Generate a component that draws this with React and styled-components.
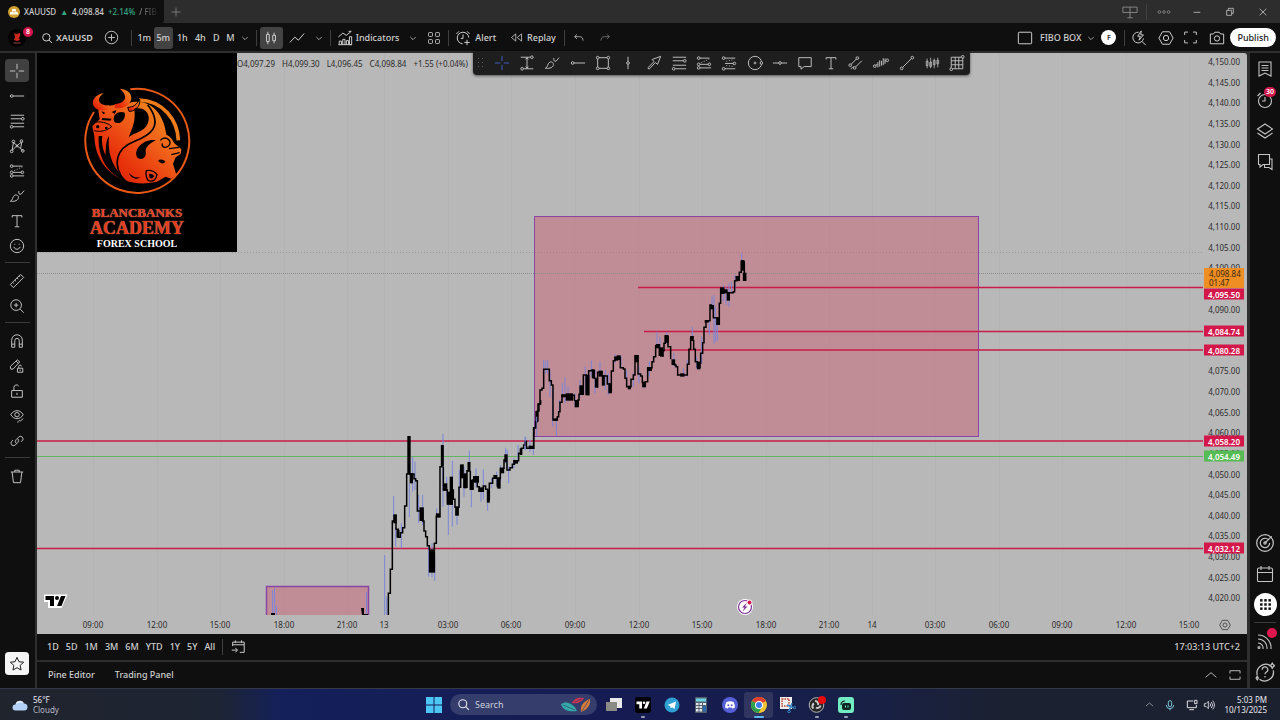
import React from "react"
import styled, { createGlobalStyle } from "styled-components"

/* Data */

const prices = Array.from({ length: 27 }, (_, i) => 4150 - i * 5)

// these would sit fully under a price tag
const coveredPrices = [4095, 4085, 4080]

const ticks = [
  ["09:00", 64],
  ["12:00", 63],
  ["15:00", 64],
  ["18:00", 63],
  ["21:00", 37],
  ["13", 64],
  ["03:00", 63],
  ["06:00", 64],
  ["09:00", 64],
  ["12:00", 63],
  ["15:00", 64],
  ["18:00", 63],
  ["21:00", 43],
  ["14", 63],
  ["03:00", 64],
  ["06:00", 63],
  ["09:00", 64],
  ["12:00", 63],
  ["15:00", 14],
]

const tags = [
  { value: "4,095.50", y: 241, color: "#d3174b" },
  { value: "4,084.74", y: 278, color: "#d3174b" },
  { value: "4,080.28", y: 297, color: "#d3174b" },
  { value: "4,058.20", y: 388, color: "#d3174b" },
  { value: "4,054.49", y: 403, color: "#56bb54" },
  { value: "4,032.12", y: 495, color: "#d3174b" },
]

// [x, top, bottom] of every wick, three units to a pixel
const wicksA = [
  [44, 465, 645], [50, 590, 645], [71, 288, 350], [77, 380, 440], [94, 370, 445],
  [118, 250, 352], [128, 170, 275], [135, 185, 270], [146, 285, 370], [158, 285, 375],
  [176, 440, 530], [186, 430, 532], [194, 470, 543], [200, 325, 430], [219, 102, 320],
  [230, 230, 290], [235, 300, 405], [247, 183, 380], [261, 330, 375], [268, 210, 320],
  [282, 200, 290], [298, 152, 200], [304, 250, 322], [318, 205, 262], [333, 270, 305],
  [340, 208, 298], [353, 300, 332], [365, 235, 265], [380, 215, 255], [392, 195, 240],
  [407, 143, 190], [412, 150, 200], [416, 200, 250], [432, 175, 205], [444, 135, 180],
  [467, 112, 150], [480, 120, 155], [490, 140, 165],
]
const wicksB = [
  [15, 590, 630], [50, 530, 588], [71, 360, 440], [77, 362, 400], [83, 360, 400],
  [90, 390, 470], [98, 440, 560], [109, 540, 588], [118, 480, 510], [127, 430, 480],
  [135, 412, 490], [144, 440, 485], [165, 460, 500], [180, 420, 470], [196, 380, 460],
  [214, 362, 410], [225, 390, 460], [240, 365, 400], [256, 390, 450], [265, 400, 465],
  [285, 342, 370], [303, 345, 380], [320, 390, 440], [340, 400, 440], [357, 380, 430],
  [372, 430, 445], [388, 365, 410], [411, 275, 320], [420, 290, 345], [440, 276, 310],
  [462, 340, 380], [490, 385, 410], [502, 360, 410], [517, 260, 300], [530, 350, 385],
  [545, 290, 370], [568, 240, 285], [576, 170, 210], [582, 165, 310], [587, 200, 305],
  [592, 240, 303], [610, 135, 185], [618, 140, 195], [627, 130, 200], [635, 125, 160],
  [645, 105, 150], [665, 40, 90],
]

// [centre x, top, bottom, width] of the wide bodies
const bodiesA = [
  [75, 345, 370, 10], [84, 390, 413, 9], [117, 108, 222, 10], [124, 220, 250, 10],
  [155, 322, 363, 13], [186, 448, 518, 19], [204, 340, 352, 13], [217, 135, 200, 9],
  [226, 250, 272, 12], [236, 275, 313, 9], [244, 230, 315, 10], [261, 320, 347, 11],
  [276, 193, 235, 11], [286, 220, 265, 10], [297, 186, 215, 9], [307, 240, 270, 9],
  [318, 228, 248, 18], [332, 262, 276, 14], [355, 268, 308, 9], [376, 225, 235, 12],
  [387, 232, 266, 10], [397, 204, 220, 11], [408, 163, 187, 10], [437, 180, 191, 14],
  [467, 122, 138, 9], [483, 137, 147, 15], [501, 33, 65, 10],
]
const bodiesB = [
  [3, 625, 645, 8], [106, 535, 543, 12], [131, 463, 472, 14], [148, 460, 482, 22],
  [170, 480, 502, 12], [184, 436, 465, 12], [202, 405, 466, 12], [220, 388, 415, 9],
  [229, 415, 443, 9], [242, 392, 410, 13], [250, 405, 437, 9], [270, 430, 460, 10],
  [289, 350, 362, 12], [296, 346, 360, 12], [328, 437, 448, 9], [350, 345, 367, 11],
  [372, 425, 442, 11], [390, 382, 393, 12], [414, 312, 325, 13], [425, 322, 350, 10],
  [440, 285, 308, 12], [460, 358, 375, 11], [487, 400, 410, 13], [516, 288, 303, 11],
  [536, 365, 388, 10], [560, 240, 248, 12], [576, 195, 208, 11], [594, 232, 255, 11],
  [607, 143, 162, 13], [617, 148, 160, 12], [625, 156, 182, 10], [653, 108, 123, 13],
  [668, 60, 92, 11], [674, 98, 123, 11],
]

const stepsA =
  "M55 645V580H61V508H67V363H73V345H78V388H85V412H91V398H98V383H104V318H110V222H116V110M118 222H132V236H137V242H142V333H150H158V363H162V393H167V410H172V437H178V450M193 448V430H199V350H210V200H217M220 200V270H232V312H240M247 270H250V298H255V322H261M263 346V322H267V262H272V195M282 222V262H291V212H297M301 212V268H307V240H322V260H328V274H340V258H347V268H355M358 300V250H368V235H382V262M388 262V235H391V205H402V180H408M411 187V210H420V203H427V193H433V182H446V160H454V145H461V135H467M470 138V145H491V83H497V65H502V33H507V12H512V0"
const stepsB =
  "M41 627V563H47V545M54 515V492H60V450H66V445H71V388H88V422H94V435H99V540H112V530H116V515H120V487H126V466H163V482M174 500V480H177V463H190V405H202M206 466V392H216V388M223 390V415H229M233 443V397H248M253 408H262V432H270M274 458V393H280V362H285V352H296M301 350V383H310V387H315V415H320V440H333V418H340V405H345V345M354 345V402H362V408H367V430M376 440V425H383V383H396V365H401V350H407V315M418 315V348M429 350V332H432V310H436V286M444 288V320H452V358M464 370V375H468V380H473V405H502V373H507V328H512V290M521 300V328H526V365H532V385M540 385V370H542V340H548V308H552V262H558V242H570V195H576M580 195V233H594M598 255V190H602V145H612M621 158H640V155H644V122H653M658 123V97H664V62M673 64V120"

/* Icons */

const iconShapes = {
  cross: <path d="M9 1v6M9 11v6M1 9h6M11 9h6" />,
  trend: (
    <>
      <circle cx="3" cy="9" r="1.5" />
      <path d="M4.500 9H17" />
    </>
  ),
  fib: (
    <>
      <path d="M2 2.500h15M2 6.500h12M2 11.500h15M4.500 15.500H17" />
      <circle cx="15.500" cy="6.500" r="1.500" />
      <circle cx="3" cy="15.500" r="1.500" />
    </>
  ),
  pattern: (
    <>
      <path d="M3.500 14L5 5l8 7 1.500-8M3.500 14l5-5 5-4M13 12l3 2" />
      <circle cx="3" cy="15" r="1.500" />
      <circle cx="5" cy="4" r="1.500" />
      <circle cx="14" cy="3.500" r="1.500" />
      <circle cx="15.500" cy="14.500" r="1.500" />
      <circle cx="9" cy="9" r="1" />
    </>
  ),
  forecast: (
    <>
      <path d="M4.500 3.500H15M4.500 10.500H14M4.500 14.500H17" />
      <path d="M6 8.500l9-4" strokeDasharray="1 2" />
      <circle cx="3" cy="3.500" r="1.500" />
      <circle cx="3" cy="10.500" r="1.500" />
      <circle cx="15" cy="10.500" r="1.500" />
      <circle cx="3" cy="14.500" r="1.500" />
    </>
  ),
  position: (
    <>
      <path d="M4.500 3.500H16M4.500 9.500H14M4.500 15.500H16" />
      <path d="M6 7l9-2M6 12l9 1" strokeDasharray="1 2" />
      <circle cx="3" cy="3.500" r="1.500" />
      <circle cx="15" cy="9.500" r="1.500" />
      <circle cx="3" cy="15.500" r="1.500" />
    </>
  ),
  brush: (
    <path d="M1.500 15c3-1 2-5 5-7 2-1 5 1 4 3.500-1 3.500-6 3.800-9 3.500zM11 3.500c-.5 3 1 4 2.500 3.500L17 3" />
  ),
  text: <path d="M3.500 5V3h11v2M9 3v12.500M6.500 15.500h5" />,
  smile: (
    <>
      <circle cx="9" cy="9" r="7.500" />
      <path d="M5.500 10c1 3.500 6 3.500 7 0M6.500 6.500v1M11.500 6.500v1" />
    </>
  ),
  ruler: (
    <path d="M1.500 13L13 1.500 16.500 5 5 16.500zM4 10.500l1.500 1.500M6.500 8l1.500 1.500M9 5.500l1.500 1.500M11.500 3.500l1 1" />
  ),
  zoom: (
    <>
      <circle cx="8" cy="8" r="6" />
      <path d="M8 5.500v5M5.500 8h5M12.500 12.500l4 4" />
    </>
  ),
  magnet: (
    <path d="M3 16V8a6 6 0 0 1 12 0v8h-3.500V8.500a2.500 2.500 0 0 0-5 0V16zM3 12.500h3.500M11.500 12.500H15" />
  ),
  penLock: (
    <path d="M2 12.500L1.500 9.500 9.500 2l2.500 2.500-7.500 8zM8 3.500l2.500 2.500M9.500 11.500h6v4.500h-6zM11 11.500v-2a1.500 1.500 0 0 1 3 0M12.500 13v1.500" />
  ),
  lock: <path d="M3 8.500h12v7.500H3zM5.500 8.500V5a3 3 0 0 1 5.500-1.500M9 11v2.500" />,
  eye: (
    <>
      <path d="M2 7.500c3.500-6 10.500-6 14 0-3.500 6-10.500 6-14 0zM10 16.500c0-2 2-3 3-2M13 14.500l3-2.500" />
      <circle cx="9" cy="7.500" r="2.500" />
    </>
  ),
  link: (
    <path d="M8 11.500a3 3 0 0 1 0-4l3.500-3.500a3 3 0 0 1 4 4L13.500 10M10 6.500a3 3 0 0 1 0 4L6.500 14a3 3 0 0 1-4-4L4.500 8" />
  ),
  trash: <path d="M2 4.500h14M6.500 4.500V2.500h5v2M3.500 4.500l1.500 12h8l1.500-12" />,
  star: <path d="M9 1.500l2.200 4.900 5.300.6-4 3.600 1.100 5.200L9 13.200l-4.600 2.600 1.100-5.200-4-3.600 5.300-.6z" />,
  list: <path d="M3 2h12v14l-6-3-6 3zM5.500 5.500h7M5.500 8h7M5.500 10.500h7" />,
  alarm: (
    <>
      <circle cx="9" cy="10" r="6.500" />
      <path d="M9 6v4H6M1.500 5l3-3" />
    </>
  ),
  layers: <path d="M1.500 7L9 2l7.500 5L9 12zM1.500 11L9 16l7.500-5" />,
  chat: <path d="M2.500 1.500h11v10H7l-3 2.500v-2.500H2.500zM13.500 6h2.500v10.500L13 14.500H8.500V12" />,
  target: (
    <>
      <circle cx="9" cy="9" r="7.500" />
      <path d="M12 6a4.200 4.200 0 1 0 1.200 3M9 9l6-6" />
      <circle cx="9" cy="9" r="1" />
    </>
  ),
  calendar: <path d="M1.500 4.500q0-1.500 1.500-1.500h12q1.500 0 1.500 1.500v11q0 1-1 1h-13q-1 0-1-1zM1.500 7.500h15M5 1v4M13 1v4" />,
  dots9: (
    <g fill="currentColor" stroke="none">
      {[4, 9, 14].map((x) => [4, 9, 14].map((y) => <rect key={x + "-" + y} x={x - 1.5} y={y - 1.5} width="3" height="3" />))}
    </g>
  ),
  rss: (
    <>
      <path d="M2 3a13 13 0 0 1 13 14M2 7a9 9 0 0 1 9 10M2 11a5 5 0 0 1 5 6" />
      <circle cx="3" cy="15.500" r="1" />
    </>
  ),
  help: (
    <>
      <path d="M13.500 3A8 8 0 0 0 2 12M4 15.500A8 8 0 0 0 16.500 7.500M6.500 7a2.500 2.500 0 1 1 3.800 2c-1 .7-1.300 1-1.300 2M9 12.500v1.500" />
      <path d="M15.500 1l1 1.500 1.500.8-1.500.8-1 1.500-.8-1.500-1.500-.8 1.500-.8zM2 13l1 1.500-1 1.500-1-1.500z" />
    </>
  ),
  search: (
    <>
      <circle cx="8" cy="8" r="5.500" strokeWidth="1.500" />
      <path d="M12 12l4.500 4.500" strokeWidth="1.500" />
    </>
  ),
  plusCircle: (
    <>
      <circle cx="9" cy="9" r="7.500" />
      <path d="M9 5v8M5 9h8" />
    </>
  ),
  down: <path d="M5 7.500l4 4 4-4" />,
  up: <path d="M2 12l7-6 7 6" />,
  candles: <path d="M4 5h3v8H4zM5.500 2v3M5.500 13v3M11 6h3v6h-3zM12.500 3v3M12.500 12v3" />,
  line: <path d="M1 14l5.500-6 4 3.500L17 4" />,
  indicators: (
    <path d="M1.500 8l5-4.500 4 2.500L16 1.500M16 1.500h-3M2.500 16.500v-4h2.500v4M6.500 16.500v-6H9v6M10.500 16.500V12H13v4.500M14 16.500v-9h2.500v9zM1.500 16.500h15" />
  ),
  tiles: (
    <>
      <rect x="2" y="2" width="5" height="5" rx="1" />
      <rect x="11" y="2" width="5" height="5" rx="1" />
      <rect x="2" y="11" width="5" height="5" rx="1" />
      <rect x="11" y="11" width="5" height="5" rx="1" />
    </>
  ),
  alert: (
    <path d="M15.500 8.500A6.500 6.500 0 1 0 8.500 15.500M9 5v4.500H6.500M1.500 4.500l3-3M16.500 4.500l-3-3M13.500 11v6M10.500 14h6" />
  ),
  rewind: <path d="M8 4v10L2 9zM16 4v10l-6-5z" />,
  undo: <path d="M6 3.500L2.500 7 6 10.500M2.500 7H10c3.500 0 5 2.500 5 6" />,
  redo: <path d="M12 3.500L15.500 7 12 10.500M15.500 7H8c-3.500 0-5 2.500-5 6" />,
  square: <rect x="1.500" y="2.500" width="15" height="13" rx="1" />,
  quick: (
    <path d="M8.500 2.500a6 6 0 1 0 5.500 7M12 12.500l4.500 4.500M11.500 1L7.500 7h3L9 11.500 14 5.500h-3z" />
  ),
  gear: (
    <>
      <path d="M5 2h8l4 7-4 7H5L1 9z" />
      <circle cx="9" cy="9" r="3" />
    </>
  ),
  full: <path d="M2 6V2.500h4M12 2.500h4V6M16 12v3.500h-4M6 15.500H2V12" />,
  camera: (
    <>
      <path d="M1.500 4.500H5l1.500-2h5l1.500 2h3.500v11h-15z" />
      <circle cx="9" cy="9.500" r="3" />
    </>
  ),
  range: (
    <>
      <path d="M2 2.500h11M5 15.500h11M9 2.500v13M7.500 5L9 3l1.500 2M7.500 13L9 15l1.500-2" />
      <circle cx="14.500" cy="2.500" r="1.500" />
      <circle cx="3.500" cy="15.500" r="1.500" />
    </>
  ),
  box: (
    <>
      <path d="M4.500 3h9M4.500 15h9M3 4.500v9M15 4.500v9" />
      <circle cx="3" cy="3" r="1.500" />
      <circle cx="15" cy="3" r="1.500" />
      <circle cx="3" cy="15" r="1.500" />
      <circle cx="15" cy="15" r="1.500" />
    </>
  ),
  vline: (
    <>
      <path d="M9 2v5.500M9 10.500V16" />
      <circle cx="9" cy="9" r="1.500" />
    </>
  ),
  hline: (
    <>
      <path d="M1 9h6.500M10.500 9H17" />
      <circle cx="9" cy="9" r="1.500" />
    </>
  ),
  arrow: <path d="M16.500 1.500l-3.500 9-2.500-2-7 7.500-1.500-1.500L9 7.500l-2-2.500z" />,
  circle: (
    <>
      <circle cx="9" cy="9" r="7.500" />
      <circle cx="9" cy="9" r="1" />
      <circle cx="16.300" cy="9" r="1.500" fill="#1e1e1e" />
    </>
  ),
  note: <path d="M2 3h14v10H8l-3.500 3v-3H2z" />,
  channel: (
    <>
      <path d="M3.500 10.500l6-6M8.500 13.500l7-7M3 16l3-3" />
      <circle cx="2.500" cy="11.500" r="1.500" />
      <circle cx="10.500" cy="3.500" r="1.500" />
      <circle cx="7.500" cy="14.500" r="1.500" />
    </>
  ),
  bars: (
    <>
      <path d="M3 11.500l2-1M5.500 8v6M7.500 6v7M9.500 6.500v5.500M11.500 3.500v8M13.500 4v6M13.500 7l1-.5" />
      <circle cx="2" cy="12.500" r="1.500" />
      <circle cx="16" cy="6" r="1.500" />
    </>
  ),
  segment: (
    <>
      <path d="M4 14L14 4" />
      <circle cx="3" cy="15" r="1.500" />
      <circle cx="15" cy="3" r="1.500" />
    </>
  ),
  volume: <path d="M3.500 4v11M2.500 7h2v5h-2zM7.500 3v12M6.500 8h2v5h-2zM11.500 4v11M10.500 6h2v5h-2zM15.500 3v11M14.500 6h2v4h-2z" strokeWidth="0.900" />,
  grid: (
    <>
      <path d="M2.500 2.500h13v13h-13zM2.500 6.500h13M2.500 11h13M7 2.500v13M11 2.500v13" />
      <circle cx="15.500" cy="2" r="1.500" fill="#1e1e1e" />
      <circle cx="2.500" cy="16" r="1.500" fill="#1e1e1e" />
    </>
  ),
  goTo: <path d="M3 8V3.500h13v11.500h-5M3 6.500h13M6 1.500v3M13 1.500v3M2 12.500h6M6 10l2.500 2.500L6 15" />,
  panel: <path d="M2.500 7V3.500h13V7M2.500 11v3.500h13V11" />,
  screens: <path d="M1 3.500h16v6H1zM9 3.500v12M6 15.500h6" />,
  more: (
    <>
      <circle cx="3" cy="9" r="1.700" />
      <circle cx="9" cy="9" r="1.700" />
      <circle cx="15" cy="9" r="1.700" />
    </>
  ),
  minimize: <path d="M4 9.500h10" />,
  restore: <path d="M4 6.500h7.500V14H4zM6.500 6.500v-3H14V11h-2.500" />,
  close: <path d="M4 4l10 10M14 4L4 14" />,
  plus: <path d="M9 1v16M1 9h16" strokeWidth="1.500" />,
  mic: <path d="M6.500 5a2.500 2.500 0 0 1 5 0v4a2.500 2.500 0 0 1-5 0zM3.500 9a5.500 5.500 0 0 0 11 0M9 14.500V17" strokeWidth="1.500" />,
  monitor: <path d="M11 3H2v10h13.500V9M5 16h7M13 2h3.500v5H13z" strokeWidth="1.500" />,
  speaker: <path d="M2 7h2.500L8 3.500v11L4.500 11H2zM10.500 6.500q2 2.500 0 5M12.500 4.500q4 4.500 0 9M14.500 2.500q5.500 6.500 0 13" strokeWidth="1.300" />,
}

const Icon = ({ name, size = 16 }) => (
  <svg width={size} height={size} viewBox="0 0 18 18" fill="none" stroke="currentColor" strokeWidth="1.100" aria-hidden="true">
    {iconShapes[name]}
  </svg>
)

const BullBear = () => (
  <svg width="108" height="108" viewBox="250 115 324 324" aria-hidden="true">
    <defs>
      <linearGradient id="fire" x1="0.850" y1="0.100" x2="0.150" y2="0.800">
        <stop offset="0" stopColor="#f08a1c" />
        <stop offset="0.400" stopColor="#f0601a" />
        <stop offset="0.800" stopColor="#e8340c" />
        <stop offset="1" stopColor="#e02808" />
      </linearGradient>
    </defs>
    <path d="M392 122A156 156 0 1 1 283 190" fill="none" stroke="#ea5a16" strokeWidth="6" />
    {/* right half of the inner ring */}
    <path d="M418 154C490 156 534 214 536 275" fill="none" stroke="#ef7c1a" strokeWidth="11" />
    {/* bull on the left, bear turned over on the right */}
    <path
      d="M296 184C310 170 330 172 345 168C362 172 380 168 398 160C450 152 492 190 500 258C512 262 520 276 524 284L545 302L543 316L528 326L520 345L530 378L515 390L498 384L470 400L440 404C350 408 286 350 284 262L278 232L300 212z"
      fill="url(#fire)"
    />
    <g fill="url(#fire)">
      <path d="M328 170C296 172 288 150 312 134C280 138 270 168 290 180C300 186 316 186 328 180z" />
      <path d="M345 166C378 164 388 142 360 120C398 122 406 156 380 172C368 180 354 180 345 178z" />
      <path d="M384 176C400 176 412 168 420 152C424 172 404 190 388 188z" stroke="#000" strokeWidth="3" />
    </g>
    <g fill="#000">
      <path d="M297 262C294 330 325 378 385 400C345 364 322 325 328 262C322 272 318 280 318 320C308 300 305 278 308 262z" />
      <path d="M404 180C446 170 462 215 432 241C412 254 398 256 387 266C400 232 408 218 404 180z" />
      <path d="M342 214C340 195 360 185 375 192C380 210 362 230 345 221z" />
      <path d="M468 275C436 268 400 300 412 325C422 338 442 328 438 310C436 296 450 284 468 275z" />
      <path d="M388 372C398 384 410 388 422 386C412 394 394 390 388 372z" />
      <path d="M475 336q10-8 22 2q-6 14-22-2z" />
      <path d="M308 208l28 2-4 6-26-2zM305 187l12 6-6 4zM336 190l14-6-4 12z" />
      <circle cx="294" cy="234" r="5" />
      <circle cx="320" cy="238" r="4" />
    </g>
    <g fill="none" stroke="#000" strokeWidth="5">
      <path d="M444 168C496 236 445 262 405 278C350 300 335 345 375 398" />
      <path d="M280 222C300 216 325 222 336 234C320 248 300 250 284 246" strokeWidth="3" />
      <path d="M482 275C495 260 515 272 510 288C500 302 485 296 488 284M508 300L538 296M515 318L540 312" strokeWidth="4" />
      <path d="M440 366q20-4 32 12q-4 24-26 18q-10-14-6-30z" strokeWidth="4" />
    </g>
    <path d="M448 376q10-2 16 6q-4 10-14 6z" />
  </svg>
)

const Candles = ({ x, y, wicks, bodies, steps }) => (
  <g transform={`translate(${x} ${y}) scale(0.3333)`}>
    {wicks.map(([wx, top, bottom]) => (
      <path key={wx} d={`M${wx} ${top}V${bottom}`} stroke="#7b86d8" strokeWidth="3" />
    ))}
    <path d={steps} fill="none" stroke="#000" strokeWidth="4.500" />
    {bodies.map(([bx, top, bottom, w]) => (
      <rect key={bx} x={bx - w / 2} y={top} width={w} height={bottom - top} fill="#000" />
    ))}
  </g>
)

const gridX = [93, 157, 220, 284, 347, 384, 448, 511, 575, 639, 702, 766, 829, 872, 935, 999, 1062, 1126, 1189]

const Plot = () => (
  <PlotSvg viewBox="37 53 1166 562" preserveAspectRatio="none" role="img" aria-label="XAUUSD 5 minute chart">
    {gridX.map((x) => (
      <path key={x} d={`M${x}.5 53V615`} stroke="#b4b4b4" />
    ))}
    <path d="M37 252.500H1203" stroke="#9b9b9b" strokeDasharray="1 2" />
    <rect x="534.500" y="216.500" width="444" height="220" fill="#cb53686e" stroke="#8a44a4" />
    <path d="M266.500 615V586.500H368.500V615" fill="#cb53686e" stroke="#8a44a4" strokeWidth="1.500" />
    <path d="M37 273.500H1203" stroke="#8d8d8d" strokeDasharray="1 1" />
    <g stroke="#c81c4a" strokeWidth="1.500">
      <path d="M638 287.500H1203M644 331.500H1203M664 350H1203M37 441H1203M37 548.500H1203" />
    </g>
    <path d="M37 456.500H1203" stroke="#62b560" />
    <path d="M272.500 590V615M274.500 588V615M276.500 606V615M366.500 592V614" stroke="#7b86d8" />
    <path d="M271 613h4v2h-4zM361 608h3v6h4v1h-6z" />
    <Candles x={370} y={400} wicks={wicksA} bodies={bodiesA} steps={stepsA} />
    <Candles x={520} y={240} wicks={wicksB} bodies={bodiesB} steps={stepsB} />
    <g>
      <circle cx="745" cy="607" r="8" fill="#fff" />
      <circle cx="745" cy="607" r="6.500" fill="#fff" stroke="#7d2d9b" strokeWidth="1.200" />
      <path d="M747 602.500l-5 5h2.500l-2 4 5-5H745z" fill="#7d2d9b" />
      <circle cx="749.500" cy="602.500" r="2.500" fill="#d3174b" stroke="#fff" />
    </g>
    <g>
      <path d="M45 595.500h21l-5 11.500H49v-6h-4z" fill="#fff" stroke="#fff" strokeWidth="2" />
      <path d="M45.500 596h8.500v10h-4v-6h-4.500zM61 596h4.500l-4 10H57z" />
      <circle cx="57" cy="598" r="2" />
    </g>
  </PlotSvg>
)

const drawTools = [
  ["Cursor", "cross"],
  ["Date range", "range"],
  ["Brush", "brush"],
  ["Horizontal ray", "trend"],
  ["Rectangle", "box"],
  ["Vertical line", "vline"],
  ["Arrow", "arrow"],
  ["Fib retracement", "fib"],
  ["Long position", "forecast"],
  ["Short position", "position"],
  ["Circle", "circle"],
  ["Horizontal line", "hline"],
  ["Callout", "note"],
  ["Text", "text"],
  ["Parallel channel", "channel"],
  ["Bars pattern", "bars"],
  ["Trend line", "segment"],
  ["Volume profile", "volume"],
  ["Gann box", "grid"],
]

const railGroups = [
  [["Cross", "cross"], ["Lines", "trend"], ["Fib tools", "fib"], ["Patterns", "pattern"], ["Forecast", "forecast"], ["Brushes", "brush"], ["Text tool", "text"], ["Emoji", "smile"]],
  [["Measure", "ruler"], ["Zoom in", "zoom"]],
  [["Magnet", "magnet"], ["Stay in drawing mode", "penLock"], ["Lock drawings", "lock"], ["Hide drawings", "eye"], ["Sync", "link"]],
  [["Remove", "trash"]],
]

const App = () => {
  return (
    <Page>
      <GlobalStyle />
      <TitleBar>
        <Tab>
          <svg width="12" height="12" viewBox="0 0 12 12" aria-hidden="true">
            <circle cx="6" cy="6" r="6" fill="#d0a032" />
            <path d="M4.500 3h3l.8 2.500H3.700zM2.500 6h3l.5 2.500H1.700zM6.500 6h3l.8 2.500H6z" fill="#fff" />
          </svg>
          <strong>XAUUSD</strong>
          <Up>▲</Up>
          <span>4,098.84</span>
          <Up>+2.14%</Up>
          <Fade>/ FIB</Fade>
        </Tab>
        <BarButton $w={24} aria-label="New tab" $dim>
          <Icon name="plus" size={10} />
        </BarButton>
        <Spacer />
        <BarButton $w={32} aria-label="Screens" $dim>
          <Icon name="screens" />
        </BarButton>
        <Divider />
        <BarButton $w={33} aria-label="More" $dim>
          <Icon name="more" size={14} />
        </BarButton>
        <BarButton $w={33} aria-label="Minimize">
          <Icon name="minimize" size={12} />
        </BarButton>
        <BarButton $w={33} aria-label="Restore">
          <Icon name="restore" size={12} />
        </BarButton>
        <BarButton $w={34} aria-label="Close">
          <Icon name="close" size={12} />
        </BarButton>
      </TitleBar>

      <Header>
        <Avatar aria-label="Account menu">
          <svg width="18" height="18" viewBox="0 0 18 18" aria-hidden="true">
            <circle cx="9" cy="9" r="9" fill="#000" />
            <path d="M6 4l2 1 4-1v3l-1 2 1 2-3 1-3-1 1-3z" fill="#c8281a" />
            <path d="M5.500 14h7" stroke="#96483f" />
          </svg>
          <Badge>8</Badge>
        </Avatar>
        <BarButton $gap={3} $bold>
          <Icon name="search" size={12} />
          XAUUSD
        </BarButton>
        <BarButton $w={38} aria-label="Compare symbols">
          <Icon name="plusCircle" size={15} />
        </BarButton>
        <Divider />
        <Intervals>
          <BarButton $w={19}>1m</BarButton>
          <BarButton $w={19} $active>5m</BarButton>
          <BarButton $w={19}>1h</BarButton>
          <BarButton $w={17}>4h</BarButton>
          <BarButton $w={15}>D</BarButton>
          <BarButton $w={13}>M</BarButton>
          <BarButton $w={17} aria-label="Chart interval">
            <Icon name="down" size={12} />
          </BarButton>
        </Intervals>
        <Divider />
        <Intervals>
          <BarButton $w={23} $active aria-label="Candles">
            <Icon name="candles" />
          </BarButton>
          <BarButton $w={28} aria-label="Line">
            <Icon name="line" />
          </BarButton>
          <BarButton $w={17} aria-label="Chart types">
            <Icon name="down" size={12} />
          </BarButton>
        </Intervals>
        <Divider />
        <BarButton $gap={3} $pad={6}>
          <Icon name="indicators" />
          Indicators
        </BarButton>
        <BarButton $w={15} aria-label="Indicator templates">
          <Icon name="down" size={12} />
        </BarButton>
        <BarButton $w={28} aria-label="Layout grid">
          <Icon name="tiles" size={14} />
        </BarButton>
        <Divider />
        <BarButton $gap={4} $pad={6}>
          <Icon name="alert" />
          Alert
        </BarButton>
        <BarButton $gap={4} $pad={8}>
          <Icon name="rewind" size={13} />
          Replay
        </BarButton>
        <Divider />
        <BarButton $w={29} aria-label="Undo">
          <Icon name="undo" size={12} />
        </BarButton>
        <BarButton $w={22} $dim aria-label="Redo">
          <Icon name="redo" size={12} />
        </BarButton>
        <Spacer />
        <BarButton $w={30} aria-label="Layout setup">
          <Icon name="square" />
        </BarButton>
        <BarButton>FIBO BOX</BarButton>
        <BarButton $w={20} aria-label="Manage layouts">
          <Icon name="down" size={12} />
        </BarButton>
        <Round aria-label="FIBO BOX owner">F</Round>
        <Gap />
        <Divider />
        <BarButton $w={28} aria-label="Quick search">
          <Icon name="quick" />
        </BarButton>
        <BarButton $w={25} aria-label="Settings">
          <Icon name="gear" />
        </BarButton>
        <BarButton $w={25} aria-label="Fullscreen">
          <Icon name="full" size={15} />
        </BarButton>
        <BarButton $w={27} aria-label="Snapshot">
          <Icon name="camera" />
        </BarButton>
        <Publish>Publish</Publish>
      </Header>

      <Body>
        <LeftRail aria-label="Drawing tools">
          {railGroups.map((group, i) => (
            <React.Fragment key={i}>
              {i > 0 && <RailLine />}
              {group.map(([label, icon]) => (
                <RailButton key={label} aria-label={label} $active={label === "Cross"}>
                  <Icon name={icon} />
                </RailButton>
              ))}
            </React.Fragment>
          ))}
          <Spacer />
          <StarButton aria-label="Favorites">
            <Icon name="star" />
          </StarButton>
        </LeftRail>

        <Center>
          <Chart>
            <PlotArea>
              <Plot />
              <LogoCard>
                <BullBear />
                <SchoolName>BLANCBANKS</SchoolName>
                <SchoolName $big>ACADEMY</SchoolName>
                <SchoolSub>FOREX SCHOOL</SchoolSub>
              </LogoCard>
              <Legend>
                <span>O4,097.29</span>
                <span>H4,099.30</span>
                <span>L4,096.45</span>
                <span>C4,098.84</span>
                <span>+1.55 (+0.04%)</span>
              </Legend>
              <FloatBar role="toolbar" aria-label="Favorite tools">
                <svg width="16" height="12" viewBox="0 0 16 12" fill="#5c5c5c" aria-hidden="true">
                  {[1, 5, 9].map((y) => (
                    <path key={y} d={`M5 ${y}h1v1h-1zM9 ${y}h1v1h-1z`} />
                  ))}
                </svg>
                {drawTools.map(([label, icon], i) => (
                  <FloatButton key={label} aria-label={label} $active={i === 0}>
                    <Icon name={icon} />
                  </FloatButton>
                ))}
              </FloatBar>
            </PlotArea>
            <PriceAxis>
              {prices.map((p) => (
                <span key={p}>
                  {!coveredPrices.includes(p) && p.toLocaleString("en-US", { minimumFractionDigits: 2 })}
                </span>
              ))}
              <LastPrice>
                4,098.84
                <br />
                01:47
              </LastPrice>
              {tags.map((t) => (
                <PriceTag key={t.value} $y={t.y} $color={t.color}>
                  {t.value}
                </PriceTag>
              ))}
            </PriceAxis>
            <TimeAxis>
              {ticks.map(([label, weight], i) => (
                <Tick key={i} $weight={weight}>
                  <span>{label}</span>
                </Tick>
              ))}
            </TimeAxis>
            <AxisSettings aria-label="Axis settings">
              <Icon name="gear" size={12} />
            </AxisSettings>
          </Chart>
          <RangeBar>
            {["1D", "5D", "1M", "3M", "6M", "YTD", "1Y", "5Y", "All"].map((r) => (
              <BarButton key={r}>{r}</BarButton>
            ))}
            <Divider />
            <BarButton aria-label="Go to date">
              <Icon name="goTo" />
            </BarButton>
            <Spacer />
            <BarButton>17:03:13 UTC+2</BarButton>
          </RangeBar>
          <PanelBar>
            <BarButton>Pine Editor</BarButton>
            <BarButton>Trading Panel</BarButton>
            <Spacer />
            <BarButton $w={24} aria-label="Open panel">
              <Icon name="up" size={14} />
            </BarButton>
            <BarButton $w={24} aria-label="Maximize panel">
              <Icon name="panel" size={14} />
            </BarButton>
          </PanelBar>
        </Center>

        <RightRail aria-label="Side panels">
          <SideButton aria-label="Watchlist">
            <Icon name="list" size={18} />
          </SideButton>
          <SideButton aria-label="Alerts">
            <Icon name="alarm" size={18} />
            <Badge>30</Badge>
          </SideButton>
          <SideButton aria-label="Object tree">
            <Icon name="layers" size={18} />
          </SideButton>
          <SideButton aria-label="Chats">
            <Icon name="chat" size={18} />
          </SideButton>
          <Spacer />
          <SideButton aria-label="Screeners">
            <Icon name="target" size={20} />
          </SideButton>
          <SideButton aria-label="Calendars">
            <Icon name="calendar" size={18} />
          </SideButton>
          <SideButton aria-label="Products">
            <i>
              <Icon name="dots9" size={15} />
            </i>
          </SideButton>
          <SideLine />
          <SideButton aria-label="Notifications">
            <Icon name="rss" size={18} />
            <Dot />
          </SideButton>
          <SideButton aria-label="Help">
            <Icon name="help" size={20} />
          </SideButton>
        </RightRail>
      </Body>

      <Taskbar>
        <Weather>
          <svg width="16" height="12" viewBox="0 0 16 12" aria-hidden="true">
            <path d="M3.500 11.500a3 3 0 0 1 0-6A4.500 4.500 0 0 1 12 4.500a3.500 3.500 0 0 1 0 7z" fill="#b3d0f5" />
            <path d="M3.500 5.500A4.500 4.500 0 0 1 12 4.500a8 8 0 0 0-8.500 1z" fill="#e6f0ff" />
          </svg>
          <div>
            56°F
            <br />
            <small>Cloudy</small>
          </div>
        </Weather>
        <Apps>
          <AppButton $w={17} aria-label="Start">
            <svg width="16" height="16" viewBox="0 0 16 16" fill="#4cc6f5" aria-hidden="true">
              <path d="M0 0h7.500v7.500H0zM8.500 0H16v7.500H8.500zM0 8.500h7.500V16H0zM8.500 8.500H16V16H8.500z" />
            </svg>
          </AppButton>
          <SearchBox>
            <Icon name="search" size={13} />
            <input type="search" placeholder="Search" aria-label="Search" />
            <svg width="32" height="16" viewBox="0 0 32 16" aria-hidden="true">
              <path d="M1 7c6-4 13 0 16 7-7 1-14 0-16-7z" fill="#35a9a8" />
              <path d="M12 6c2-5 7-6 12-5-2 4-7 6-12 5z" fill="#d0374e" />
              <path d="M21 15c-1-7 3-11 9-13 1 6-3 11-9 13z" fill="#d27b3c" />
              <path d="M3 8l12 5M14 5l8-3M22 14l7-11" stroke="#2b3a66" strokeWidth="0.600" />
            </svg>
          </SearchBox>
          <AppButton aria-label="Task view">
            <svg width="16" height="16" viewBox="0 0 16 16" aria-hidden="true">
              <path d="M4 1h12v10H4z" fill="#e9e9e9" />
              <path d="M0 5h11v9H0z" fill="#8b8b85" />
            </svg>
          </AppButton>
          <AppButton aria-label="TradingView" $open>
            <svg width="16" height="16" viewBox="0 0 16 16" aria-hidden="true">
              <rect width="16" height="16" rx="3" />
              <path d="M1.500 4.500H7v7H4.300V7.200H1.500zM11.500 4.500h3.300l-3 7H8.800z" fill="#fff" />
              <circle cx="9" cy="5.800" r="1.300" fill="#fff" />
            </svg>
          </AppButton>
          <AppButton aria-label="Telegram">
            <svg width="16" height="16" viewBox="0 0 16 16" aria-hidden="true">
              <circle cx="8" cy="8" r="7.500" fill="#2f9fd4" />
              <path d="M3.500 8l8.500-3.500-1.500 7.500-2.500-1.800L6.700 11.500 6.200 9z" fill="#fff" />
            </svg>
          </AppButton>
          <AppButton aria-label="Calculator">
            <svg width="16" height="16" viewBox="0 0 16 16" aria-hidden="true">
              <rect x="2" width="12" height="16" rx="1" fill="#54606f" />
              <path d="M3 1.500h10v3H3z" fill="#6cd5e3" />
              <path d="M3 6h2.500v2H3zM6.500 6H9v2H6.500zM10 6h3v2h-3zM3 9h2.500v2H3zM6.500 9H9v2H6.500zM3 12h2.500v2.500H3zM6.500 12H9v2.500H6.500z" fill="#e2e5ea" />
              <path d="M10 9h3v5.500h-3z" fill="#2a6bb0" />
            </svg>
          </AppButton>
          <AppButton aria-label="Discord">
            <svg width="16" height="16" viewBox="0 0 16 16" aria-hidden="true">
              <circle cx="8" cy="8" r="8" fill="#5560d8" />
              <path d="M4.500 5c2-1 5-1 7 0 1 1.500 1.500 3.500 1.300 5.500-1 .8-1.800 1-2.500 1l-.7-1H6.400l-.7 1c-.7 0-1.500-.2-2.500-1C3 8.500 3.500 6.500 4.500 5z" fill="#fff" />
              <circle cx="6.300" cy="8.200" r="1" fill="#5560d8" />
              <circle cx="9.700" cy="8.200" r="1" fill="#5560d8" />
            </svg>
          </AppButton>
          <AppButton aria-label="Chrome" $open $current>
            <svg width="16" height="16" viewBox="0 0 16 16" aria-hidden="true">
              <circle cx="8" cy="8" r="8" fill="#f4c430" />
              <path d="M8 8L1 4a8 8 0 0 1 14 0z" fill="#df3f31" />
              <path d="M8 8L1 4a8 8 0 0 0 6.500 12L11 10z" fill="#2f9e4f" />
              <circle cx="8" cy="8" r="4" fill="#fff" />
              <circle cx="8" cy="8" r="3" fill="#3d7de8" />
            </svg>
          </AppButton>
          <AppButton aria-label="Snipping Tool">
            <svg width="16" height="16" viewBox="0 0 16 16" aria-hidden="true">
              <path d="M0 0h12v12H0z" fill="#f2efee" />
              <path d="M2 2h7v7H2z" fill="none" stroke="#b5432f" strokeWidth="1.500" strokeDasharray="1.500 1" />
              <path d="M7 8l7 3M9 14l3-8" stroke="#3586c4" strokeWidth="1.500" />
              <circle cx="9" cy="14.500" r="1.300" fill="none" stroke="#3586c4" />
              <circle cx="14.700" cy="10.500" r="1.200" fill="none" stroke="#3586c4" />
            </svg>
          </AppButton>
          <AppButton aria-label="OBS Studio" $open>
            <svg width="18" height="18" viewBox="0 0 18 18" aria-hidden="true">
              <circle cx="8.500" cy="9" r="7.300" fill="#262626" stroke="#b5b5b5" />
              <path d="M7 5a3 3 0 0 1 3 4M12.500 9.500a3 3 0 0 1-4.500 2M5.500 12.500a3 3 0 0 1 .5-5" fill="none" stroke="#c9c9c9" strokeWidth="2" />
              <circle cx="14" cy="4" r="4" fill="#e8090c" />
            </svg>
          </AppButton>
          <AppButton aria-label="Streamlabs" $open>
            <svg width="16" height="16" viewBox="0 0 16 16" aria-hidden="true">
              <rect width="16" height="16" rx="3" fill="#73ecc4" />
              <path d="M3 8c0-3 2-4 4-4" fill="none" stroke="#0d2420" strokeWidth="1.200" />
              <rect x="4" y="6" width="9" height="7" rx="2" fill="#0d2420" />
              <path d="M7.500 8.500v2M10 8.500v2" stroke="#73ecc4" />
            </svg>
          </AppButton>
        </Apps>
        <Tray>
          <TrayButton $w={18} aria-label="Hidden icons">
            <Icon name="up" size={9} />
          </TrayButton>
          <TrayButton $w={24} aria-label="Microphone" $color="#7cc3d6">
            <Icon name="mic" size={12} />
          </TrayButton>
          <TrayButton $w={20} aria-label="Network">
            <Icon name="monitor" size={12} />
          </TrayButton>
          <TrayButton $w={14} aria-label="Volume">
            <Icon name="speaker" size={12} />
          </TrayButton>
          <Clock>
            5:03 PM
            <br />
            10/13/2025
          </Clock>
        </Tray>
      </Taskbar>
    </Page>
  )
}

const GlobalStyle = createGlobalStyle`
  * {
    box-sizing: border-box;
  }
  body {
    margin: 0;
    background: #2e2e2e;
    color: #d0d0d0;
    font-family: "Noto Sans", "Open Sans", sans-serif;
    font-size: 9px;
    line-height: 12px;
  }
  button,
  input {
    font: inherit;
    color: inherit;
    background: none;
    border: 0;
    padding: 0;
    margin: 0;
  }
  svg {
    display: block;
    flex-shrink: 0;
  }
`

const Page = styled.div`
  display: flex;
  flex-direction: column;
  min-height: 100vh;
`

const Spacer = styled.div`
  flex: 1;
`

const Gap = styled.div`
  width: 8px;
`

const Divider = styled.div`
  width: 1px;
  height: 16px;
  background: #3f3f3f;
`

const BarButton = styled.button`
  display: flex;
  align-items: center;
  justify-content: center;
  gap: ${(p) => p.$gap || 0}px;
  width: ${(p) => (p.$w ? p.$w + "px" : "auto")};
  height: 22px;
  padding: 0 ${(p) => p.$pad || 0}px;
  border-radius: 3px;
  white-space: nowrap;
  font-weight: ${(p) => (p.$bold ? 600 : 500)};
  color: ${(p) => (p.$dim ? "#858585" : "#d0d0d0")};
  background: ${(p) => (p.$active ? "#434343" : "transparent")};
`

const TitleBar = styled.header`
  display: flex;
  align-items: center;
  height: 23px;
  background: #2d2d2d;
`

const Tab = styled.div`
  display: flex;
  align-items: center;
  gap: 4px;
  width: 164px;
  height: 23px;
  padding-left: 8px;
  white-space: nowrap;
  overflow: hidden;
  font-size: 8px;
  font-weight: 500;
  background: #0f0f0f;
  border-radius: 0 0 3px 0;

  strong {
    font-weight: 500;
  }
`

const Up = styled.span`
  color: #36a883;
`

const Fade = styled.span`
  background: linear-gradient(to right, #999, #222);
  background-clip: text;
  color: transparent;
`

const Header = styled.nav`
  display: flex;
  align-items: center;
  height: 28px;
  padding: 1px 4px 0 8px;
  margin-bottom: 2px;
  background: #0f0f0f;
`

const Intervals = styled.div`
  display: flex;
  align-items: center;
  padding: 0 2px 0 3px;
`

const Avatar = styled.button`
  position: relative;
  width: 33px;
`

const Badge = styled.span`
  position: absolute;
  top: -2px;
  left: 15px;
  min-width: 10px;
  padding: 0 2px;
  border-radius: 5px;
  font-size: 7px;
  font-weight: 600;
  line-height: 10px;
  text-align: center;
  color: #fff;
  background: #d3174b;
`

const Round = styled.button`
  width: 15px;
  height: 15px;
  border-radius: 50%;
  font-size: 7px;
  font-weight: 600;
  line-height: 15px;
  color: #222;
  background: #fff;
`

const Publish = styled.button`
  height: 19px;
  padding: 0 7px;
  border-radius: 10px;
  font-weight: 500;
  color: #1a1a1a;
  background: #fff;
`

const Body = styled.main`
  display: flex;
  flex: 1;
`

const LeftRail = styled.nav`
  display: flex;
  flex-direction: column;
  align-items: center;
  width: 35px;
  margin-right: 2px;
  padding: 5px 1px 12px 0;
  background: #0f0f0f;
`

const RailButton = styled.button`
  display: flex;
  align-items: center;
  justify-content: center;
  width: 24px;
  height: 25px;
  border-radius: 4px;
  color: #c4c4c4;
  background: ${(p) => (p.$active ? "#404040" : "transparent")};
  background-clip: padding-box;
  border: solid transparent;
  border-width: 1px 0;
`

const RailLine = styled.div`
  width: 25px;
  height: 1px;
  margin: 4px 0 5px;
  background: #3a3a3a;
`

const StarButton = styled(RailButton)`
  color: #1a1a1a;
  background: #f5f5f5;
  background-clip: padding-box;
`

const Center = styled.section`
  display: flex;
  flex-direction: column;
  flex: 1;
  min-width: 0;
`

const Chart = styled.div`
  display: grid;
  grid-template-columns: 1fr 44px;
  grid-template-rows: 1fr 19px;
  flex: 1;
  color: #2c2c2c;
  font-size: 8px;
  background: #b8b8b8;
  border-radius: 0 3px 0 0;
`

const PlotArea = styled.div`
  position: relative;
  min-height: 420px;
`

const PlotSvg = styled.svg`
  position: absolute;
  inset: 0;
  width: 100%;
  height: 100%;
`

const LogoCard = styled.figure`
  position: absolute;
  top: 0;
  left: 0;
  display: flex;
  flex-direction: column;
  align-items: center;
  width: 200px;
  height: 199px;
  margin: 0;
  padding-top: 34px;
  background: #000;
`

const SchoolName = styled.div`
  margin-top: ${(p) => (p.$big ? 0 : 10)}px;
  font-family: "Liberation Serif", serif;
  font-size: ${(p) => (p.$big ? 18 : 13)}px;
  font-weight: 700;
  line-height: ${(p) => (p.$big ? 17 : 15)}px;
  color: #e23c1b;
  text-shadow: 0 0 1px #f4b9a0;
`

const SchoolSub = styled.div`
  font-family: "Liberation Serif", serif;
  font-size: 10px;
  font-weight: 700;
  line-height: 13px;
  color: #fff;
`

const Legend = styled.div`
  position: absolute;
  top: 5px;
  left: 200px;
  display: flex;
  gap: 7px;
  white-space: nowrap;
`

const FloatBar = styled.div`
  position: absolute;
  top: -2px;
  left: 436px;
  display: flex;
  align-items: center;
  width: 497px;
  height: 24px;
  border-radius: 0 0 4px 4px;
  background: #1e1e1e;
  box-shadow: 0 1px 3px #0008;
`

const FloatButton = styled.button`
  display: flex;
  flex: 1;
  justify-content: center;
  color: ${(p) => (p.$active ? "#3f5fc0" : "#bdbdbd")};
`

const PriceAxis = styled.div`
  position: relative;
  display: flex;
  flex-direction: column;
  padding: 3px 7px 2px 0;
  text-align: right;

  > span {
    flex: 1 1 0;
    min-height: 0;
  }
`

const PriceTag = styled.div`
  position: absolute;
  top: ${(p) => (p.$y / 562) * 100}%;
  left: 1px;
  right: 3px;
  padding-right: 4px;
  transform: translateY(-50%);
  font-weight: 600;
  line-height: 11px;
  color: #fff;
  background: ${(p) => p.$color};
`

const LastPrice = styled(PriceTag).attrs({ $y: 225, $color: "#ef8e22" })`
  padding: 1px 0 1px 5px;
  font-weight: 400;
  line-height: 9px;
  text-align: left;
  color: #3b2a10;
`

const TimeAxis = styled.div`
  display: flex;
  align-items: center;
  padding-left: 56px;
`

const Tick = styled.div`
  flex: ${(p) => p.$weight} 1 0;
  min-width: 0;

  span {
    display: flex;
    justify-content: center;
    width: 0;
  }
`

const AxisSettings = styled.button`
  display: flex;
  align-items: center;
  justify-content: center;
`

const RangeBar = styled.div`
  display: flex;
  align-items: center;
  gap: 7px;
  height: 26px;
  padding: 0 7px 0 10px;
  background: #0f0f0f;
`

const PanelBar = styled.div`
  display: flex;
  align-items: center;
  height: 26px;
  margin-top: 2px;
  padding-left: 11px;
  background: #0f0f0f;

  ${BarButton}:first-child {
    margin-right: 20px;
  }
`

const RightRail = styled.nav`
  display: flex;
  flex-direction: column;
  align-items: center;
  width: 30px;
  margin-left: 3px;
  padding-bottom: 1px;
  background: #0f0f0f;
`

const SideButton = styled.button`
  position: relative;
  display: flex;
  align-items: center;
  justify-content: center;
  width: 30px;
  height: 31px;
  color: #c4c4c4;

  i {
    display: grid;
    place-items: center;
    width: 23px;
    height: 23px;
    border-radius: 50%;
    color: #111;
    background: #fff;
  }

  ${Badge} {
    top: 3px;
    left: 14px;
  }
`

const SideLine = styled.div`
  width: 22px;
  height: 1px;
  margin: 2px 0;
  background: #3a3a3a;
`

const Dot = styled.span`
  position: absolute;
  top: 3px;
  right: 3px;
  width: 10px;
  height: 10px;
  border-radius: 50%;
  background: #e0174f;
`

const Taskbar = styled.footer`
  display: grid;
  grid-template-columns: 1fr auto 1fr;
  align-items: center;
  height: 32px;
  border-top: 1px solid #34394a;
  color: #e8e8ee;
  font-size: 8px;
  line-height: 10px;
  background: linear-gradient(to right, #20242d 0, #1d2433 17%, #14205a 22%, #161b52 50%, #182046 68%, #1b2131 78%, #1c2130 100%);
`

const Weather = styled.div`
  display: flex;
  align-items: center;
  gap: 5px;
  padding-left: 12px;

  small {
    font-size: 8px;
    color: #b5b9c4;
  }
`

const Apps = styled.div`
  display: flex;
  align-items: center;
  padding-left: 5px;
`

const AppButton = styled.button`
  position: relative;
  display: flex;
  align-items: center;
  justify-content: center;
  width: ${(p) => p.$w || 29}px;
  height: 26px;
  border-radius: 3px;
  background: ${(p) => (p.$current ? "#ffffff1c" : "transparent")};

  &::after {
    content: "";
    display: ${(p) => (p.$open ? "block" : "none")};
    position: absolute;
    bottom: 0;
    width: ${(p) => (p.$current ? 10 : 4)}px;
    height: 2px;
    border-radius: 1px;
    background: ${(p) => (p.$current ? "#5cb9ee" : "#9aa0b4")};
  }
`

const SearchBox = styled.label`
  display: flex;
  align-items: center;
  gap: 5px;
  width: 147px;
  height: 21px;
  margin: 0 2px 0 8px;
  padding: 0 5px 0 7px;
  border-radius: 11px;
  background: #343d6c;

  input {
    flex: 1;
    min-width: 0;
    font-size: 9px;
    outline: 0;
  }
  input::placeholder {
    color: #ccd0de;
    opacity: 1;
  }
`

const Tray = styled.div`
  display: flex;
  align-items: center;
  justify-content: flex-end;
  padding-right: 13px;
`

const TrayButton = styled.button`
  display: flex;
  justify-content: center;
  width: ${(p) => p.$w}px;
  color: ${(p) => p.$color || "#e0e0e6"};
`

const Clock = styled.time`
  margin-left: 8px;
  text-align: right;
`

export default App
